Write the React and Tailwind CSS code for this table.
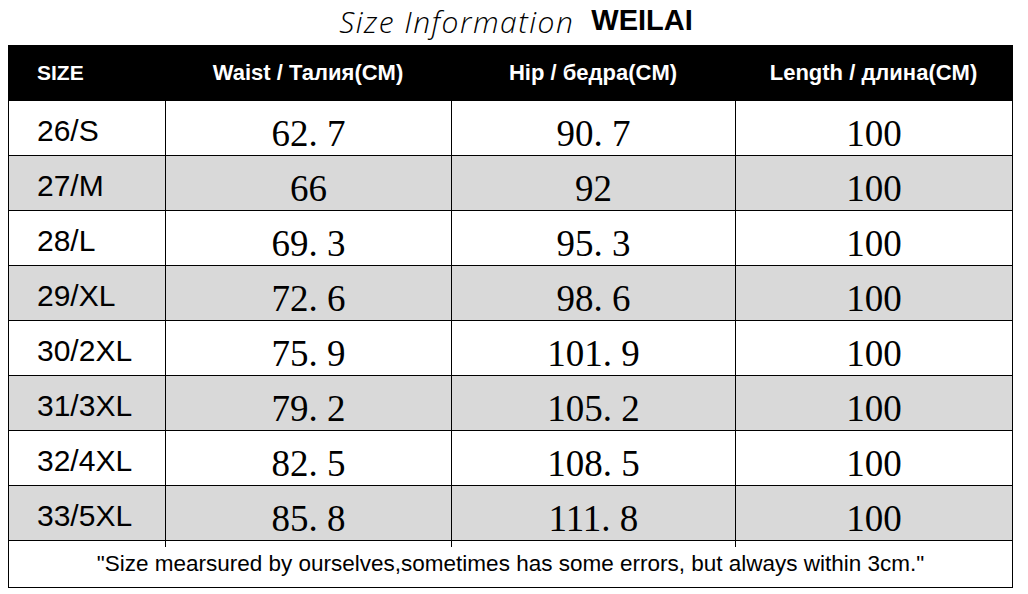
import React from "react"

const rows = [
  { size: "26/S", waist: "62. 7", hip: "90. 7", length: "100" },
  { size: "27/M", waist: "66", hip: "92", length: "100" },
  { size: "28/L", waist: "69. 3", hip: "95. 3", length: "100" },
  { size: "29/XL", waist: "72. 6", hip: "98. 6", length: "100" },
  { size: "30/2XL", waist: "75. 9", hip: "101. 9", length: "100" },
  { size: "31/3XL", waist: "79. 2", hip: "105. 2", length: "100" },
  { size: "32/4XL", waist: "82. 5", hip: "108. 5", length: "100" },
  { size: "33/5XL", waist: "85. 8", hip: "111. 8", length: "100" },
]

const cols = "grid grid-cols-[156px_286px_284px_277px]"
const num = "flex items-center justify-center border-l border-black pt-[5px] font-['Liberation_Serif',serif] text-[37px]"

export default function App() {
  return (
    <div className="h-[594px] w-[1028px] overflow-hidden bg-white font-['Liberation_Sans',Arial,sans-serif] text-black">
      <div className="flex h-[45px] items-center justify-center gap-[17px] pb-[3px] pl-[4px]">
        <span className="font-['Open_Sans',sans-serif] text-[30px] font-light italic tracking-[1.5px]">
          Size Information
        </span>
        <span className="text-[29px] font-bold">WEILAI</span>
      </div>

      <div className="ml-2 w-[1005px] border-x border-b border-black">
        <div className={`${cols} h-[55px] items-center bg-black text-[22px] font-bold text-white`}>
          <div className="pl-7 text-[21px]">SIZE</div>
          <div className="text-center">Waist / Талия(CM)</div>
          <div className="text-center">Hip / бедра(CM)</div>
          <div className="text-center">Length / длина(CM)</div>
        </div>

        {rows.map((r, i) => (
          <div
            key={r.size}
            className={`${cols} h-[55px] border-t border-black ${i % 2 ? "bg-[#d9d9d9]" : "bg-white"}`}
          >
            <div className="flex items-center pl-7 pb-[2px] text-[30px]">{r.size}</div>
            <div className={num}>{r.waist}</div>
            <div className={num}>{r.hip}</div>
            <div className={num}>{r.length}</div>
          </div>
        ))}

        <div className="flex h-[47px] items-center justify-center border-t border-black text-[22.5px]">
          "Size mearsured by ourselves,sometimes has some errors, but always within 3cm."
        </div>
      </div>
    </div>
  )
}
